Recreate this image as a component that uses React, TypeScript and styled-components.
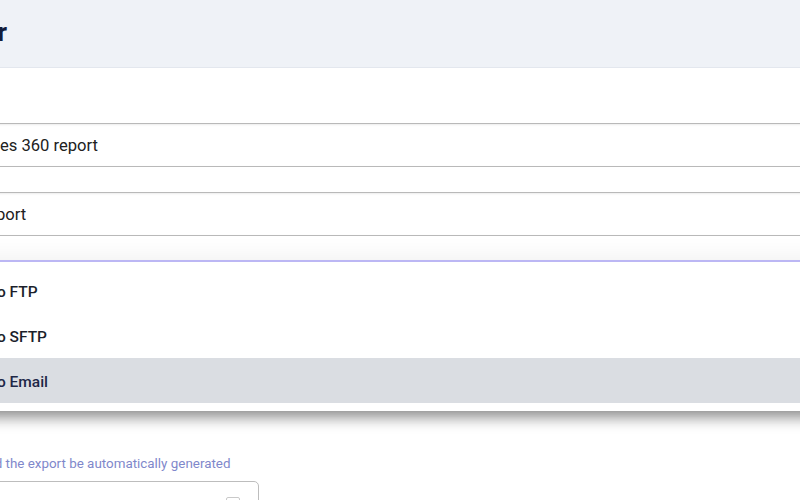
import React from 'react'
import styled, { createGlobalStyle } from 'styled-components'

const GlobalStyle = createGlobalStyle`
  html, body {
    margin: 0;
    padding: 0;
    background: #ffffff;
    font-family: Roboto, 'Liberation Sans', sans-serif;
    overflow: hidden;
  }
`

const Viewport = styled.div`
  width: 800px;
  height: 500px;
  overflow: hidden;
`

// the shot is a crop of a wider page, so the page starts off screen
const Page = styled.div`
  margin-left: -220px;
  width: 1200px;
`

const Header = styled.header`
  height: 68px;
  box-sizing: border-box;
  display: flex;
  align-items: center;
  padding-bottom: 4px;
  background: #eff2f7;
  border-bottom: 1px solid #e3e7ee;
`

const Title = styled.h1`
  margin: 0;
  width: 227px;
  text-align: right;
  white-space: nowrap;
  font-size: 26px;
  font-weight: 700;
  color: #131c3b;
`

const Form = styled.div`
  display: flex;
  flex-direction: column;
  padding: 30px 0 0 148px;
`

const Field = styled.div<{ $spaceTop?: number }>`
  display: flex;
  flex-direction: column;
  margin-top: ${p => p.$spaceTop ?? 0}px;
`

const Label = styled.label`
  font-size: 13px;
  line-height: 17px;
  height: 17px;
  margin-bottom: 8px;
  color: #4a5068;
  font-weight: 500;
`

const Input = styled.div`
  box-sizing: border-box;
  width: 1000px;
  height: 44px;
  display: flex;
  align-items: center;
  padding: 1px 0 0 48px;
  font-size: 16.6px;
  color: #212121;
  border: 1px solid #b9b9b9;
  box-shadow: inset 0 1px 2px rgba(0, 0, 0, 0.08);
  background: #fff;
`

const SelectWrap = styled.div`
  position: relative;
`

const Menu = styled.ul`
  position: absolute;
  top: -1px;
  left: 0;
  width: 1000px;
  margin: 0;
  padding: 6px 0 8px;
  list-style: none;
  background: #fff;
  border-top: 2px solid #bcb7f4;
  box-shadow: 0 -4px 22px rgba(0, 0, 0, 0.06), 0 12px 14px -6px rgba(0, 0, 0, 0.45);
  z-index: 2;
`

const MenuItem = styled.li<{ $active?: boolean }>`
  height: 45px;
  display: flex;
  align-items: center;
  padding: 2px 0 0 15px;
  box-sizing: border-box;
  font-size: 15.5px;
  font-weight: 500;
  color: ${p => (p.$active ? '#1d2747' : '#1c1f2b')};
  background: ${p => (p.$active ? '#dadde2' : 'transparent')};
`

const Helper = styled.div`
  margin: 0 0 9px -3px;
  font-size: 13.4px;
  line-height: 17px;
  color: #7f88cb;
`

const ScheduleBox = styled.div`
  box-sizing: border-box;
  width: 331px;
  height: 44px;
  display: flex;
  align-items: center;
  justify-content: flex-end;
  padding-right: 18px;
  border: 1px solid #bdbdbd;
  border-radius: 5px;
`

const options = ['Export to FTP', 'Export to SFTP', 'Export to Email']

function CalendarIcon () {
  return (
    <svg width="14" height="14" viewBox="0 0 14 14" fill="none">
      <rect x="0.5" y="1.5" width="13" height="12" rx="1.5" stroke="#c9c9c9" />
      <line x1="0.5" y1="5" x2="13.5" y2="5" stroke="#c9c9c9" />
    </svg>
  )
}

export default function App () {
  return (
    <Viewport>
      <GlobalStyle />
      <Page>
        <Header>
          <Title>Export Scheduler</Title>
        </Header>
        <Form>
          <Field>
            <Label>Name</Label>
            <Input>Sales 360 report</Input>
          </Field>
          <Field>
            <Label>Type</Label>
            <Input>Report</Input>
          </Field>
          <Field>
            <Label>Target</Label>
            <SelectWrap>
              <Input>Export to Email</Input>
              <Menu>
                {options.map(o => (
                  <MenuItem key={o} $active={o === 'Export to Email'}>{o}</MenuItem>
                ))}
              </Menu>
            </SelectWrap>
          </Field>
          <Field $spaceTop={150}>
            <Helper>When should the export be automatically generated</Helper>
            <ScheduleBox>
              <CalendarIcon />
            </ScheduleBox>
          </Field>
        </Form>
      </Page>
    </Viewport>
  )
}
